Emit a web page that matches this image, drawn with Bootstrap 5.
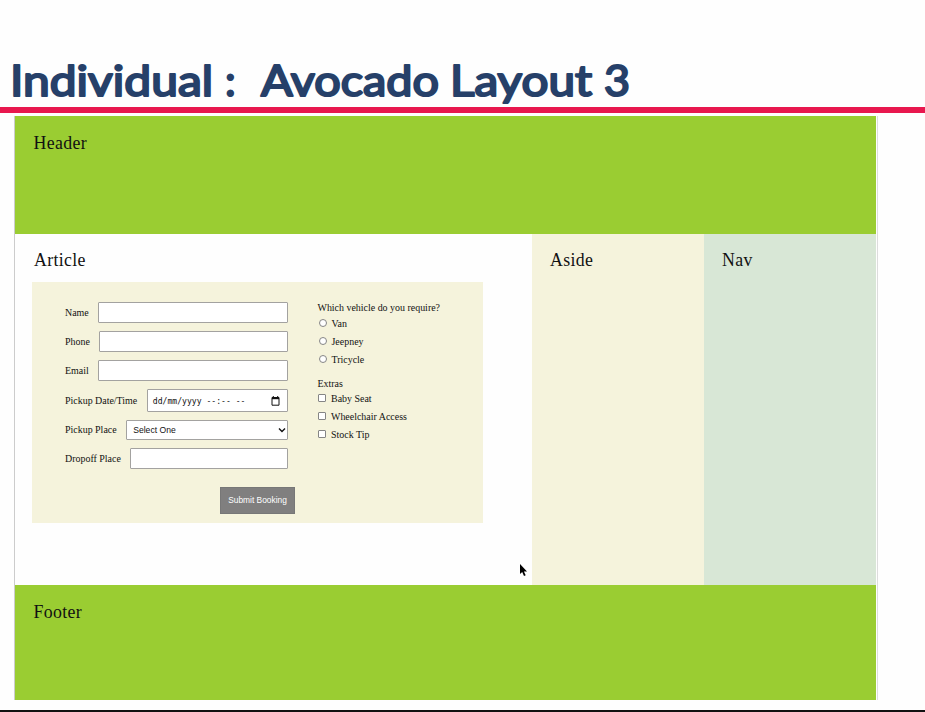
<!DOCTYPE html>
<html lang="en">
<head>
<meta charset="utf-8">
<meta name="viewport" content="width=device-width, initial-scale=1">
<title>Avocado Layout 3</title>
<link href="https://cdn.jsdelivr.net/npm/bootstrap@5.3.0/dist/css/bootstrap.min.css" rel="stylesheet">
<style>
body{height:712px;overflow:hidden;background:#fefefe;color:#111;font-family:"Liberation Serif","Times New Roman",serif;line-height:1.15}
.slide{height:712px;border-bottom:2px solid #111}
.slide-title{height:107px}
.slide-title text{font-family:Lato,"Open Sans",sans-serif;font-weight:400;font-size:42.5px;fill:#264069;stroke:#264069;stroke-width:2.1px;stroke-linejoin:round}
.rule{height:6px;background:#e8174e}
.mock{width:864px;height:584px;margin:3px 0 0 14px;border-left:1px solid #ccc;border-right:1px solid #ddd;padding-right:1px}
.region-name{font-size:17.8px;letter-spacing:.35px;line-height:21px}
.band{background:#9acd32;padding:17px 18.5px}
.band-top{height:118px}
.band-bottom{height:115px}
.middle{height:351px}
.article-col{width:517px;padding:16px 17px}
.article-col .region-name{padding-left:2px}
.side-col{width:172px;padding:16px 18px}
.beige{background:#f5f3dc}
.mint{background:#d8e7d6}
.booking{width:451px;height:241px;margin-top:11px;padding:20px 33px 0;font-size:9.95px}
.left-fields{width:223px}
.line{gap:9.6px;height:21px;margin-bottom:8px}
.line label{white-space:nowrap}
.line-date{height:23px}
.line-place{height:20px}
.box{min-width:0;height:100%;border:1px solid #a3a2a0;border-radius:1px;background:#fff;padding:0 6px;font:8.6px "Liberation Sans",Arial,sans-serif;color:#111}
.date-box{font:8.1px "DejaVu Sans Mono",monospace;padding:0 7px 0 5px}
.send{width:75px;height:27px;margin:10px -7px 0 0;border:1px solid #777;background:#807f7f;color:#fff;font:8.4px "Liberation Sans",Arial,sans-serif;padding:0 0 1px;white-space:nowrap}
.choices{margin-left:29.5px}
.question{height:13px}
.extras{height:12px;margin-top:9px}
.choice{height:18px;gap:5px;padding-left:1px}
.choice input{appearance:none;width:8px;height:8px;margin:0 0 3px;border:1px solid #858585;background:#fff;border-radius:1px}
.choice input[type=radio]{border-radius:50%}
.choice input[type=checkbox]{margin-left:-.5px}
.pointer{position:absolute;left:519px;top:563px}
</style>
<script src="https://cdn.jsdelivr.net/npm/bootstrap@5.3.0/dist/js/bootstrap.bundle.min.js"></script>
</head>
<body>
<div class="slide">
  <h1 class="slide-title m-0">
    <svg class="d-block" width="925" height="107">
      <text x="10" y="96.3" textLength="203" lengthAdjust="spacingAndGlyphs">Individual</text>
      <text x="225" y="96.3">:</text>
      <text x="261" y="96.3" textLength="178" lengthAdjust="spacingAndGlyphs">Avocado</text>
      <text x="450" y="96.3" textLength="142" lengthAdjust="spacingAndGlyphs">Layout</text>
      <text x="604" y="96.3" textLength="26" lengthAdjust="spacingAndGlyphs">3</text>
    </svg>
  </h1>
  <div class="rule"></div>
  <div class="mock">
    <header class="band band-top"><div class="region-name">Header</div></header>
    <main class="middle d-flex">
      <article class="article-col"><div class="region-name">Article</div>
        <form class="booking beige d-flex align-items-start">
          <div class="left-fields flex-shrink-0">
            <div class="line d-flex align-items-center"><label for="n">Name</label><input id="n" class="box flex-fill"></div>
            <div class="line d-flex align-items-center"><label for="p">Phone</label><input id="p" class="box flex-fill"></div>
            <div class="line d-flex align-items-center"><label for="e">Email</label><input id="e" class="box flex-fill"></div>
            <div class="line line-date d-flex align-items-center"><label>Pickup Date/Time</label>
              <div class="box date-box flex-fill d-flex align-items-center justify-content-between"><span class="text-nowrap">dd/mm/yyyy --:-- --</span>
                <svg width="9" height="10" viewBox="0 0 9 10"><path d="M1 1.5h7v7.7H1zM2.3 0v2M6.7 0v2" fill="none" stroke="#111"/><path d="M1 1h7v2.2H1z" fill="#111"/></svg></div></div>
            <div class="line line-place d-flex align-items-center"><label>Pickup Place</label>
              <div class="box flex-fill d-flex align-items-center justify-content-between pe-0"><span>Select One</span>
                <svg width="10" height="8" viewBox="0 0 10 8"><path d="M2 2.5l3 3 3-3" fill="none" stroke="#111" stroke-width="1.4"/></svg></div></div>
            <div class="line d-flex align-items-center"><label for="d">Dropoff Place</label><input id="d" class="box flex-fill"></div>
            <div class="d-flex justify-content-end"><button type="button" class="send">Submit Booking</button></div>
          </div>
          <div class="choices text-nowrap">
            <div class="question">Which vehicle do you require?</div>
            <div class="choice d-flex align-items-center"><input type="radio" name="v"><span>Van</span></div>
            <div class="choice d-flex align-items-center"><input type="radio" name="v"><span>Jeepney</span></div>
            <div class="choice d-flex align-items-center"><input type="radio" name="v"><span>Tricycle</span></div>
            <div class="extras">Extras</div>
            <div class="choice d-flex align-items-center"><input type="checkbox"><span>Baby Seat</span></div>
            <div class="choice d-flex align-items-center"><input type="checkbox"><span>Wheelchair Access</span></div>
            <div class="choice d-flex align-items-center"><input type="checkbox"><span>Stock Tip</span></div>
          </div>
        </form>
      </article>
      <aside class="side-col beige"><div class="region-name">Aside</div></aside>
      <nav class="side-col mint"><div class="region-name">Nav</div></nav>
    </main>
    <footer class="band band-bottom"><div class="region-name">Footer</div></footer>
  </div>
</div>
<svg class="pointer" width="9" height="14" viewBox="0 0 9 14"><path d="M1 1v10l2.2-2 1.8 4 1.7-.8-1.8-3.7H8z" fill="#000"/></svg>
</body>
</html>
